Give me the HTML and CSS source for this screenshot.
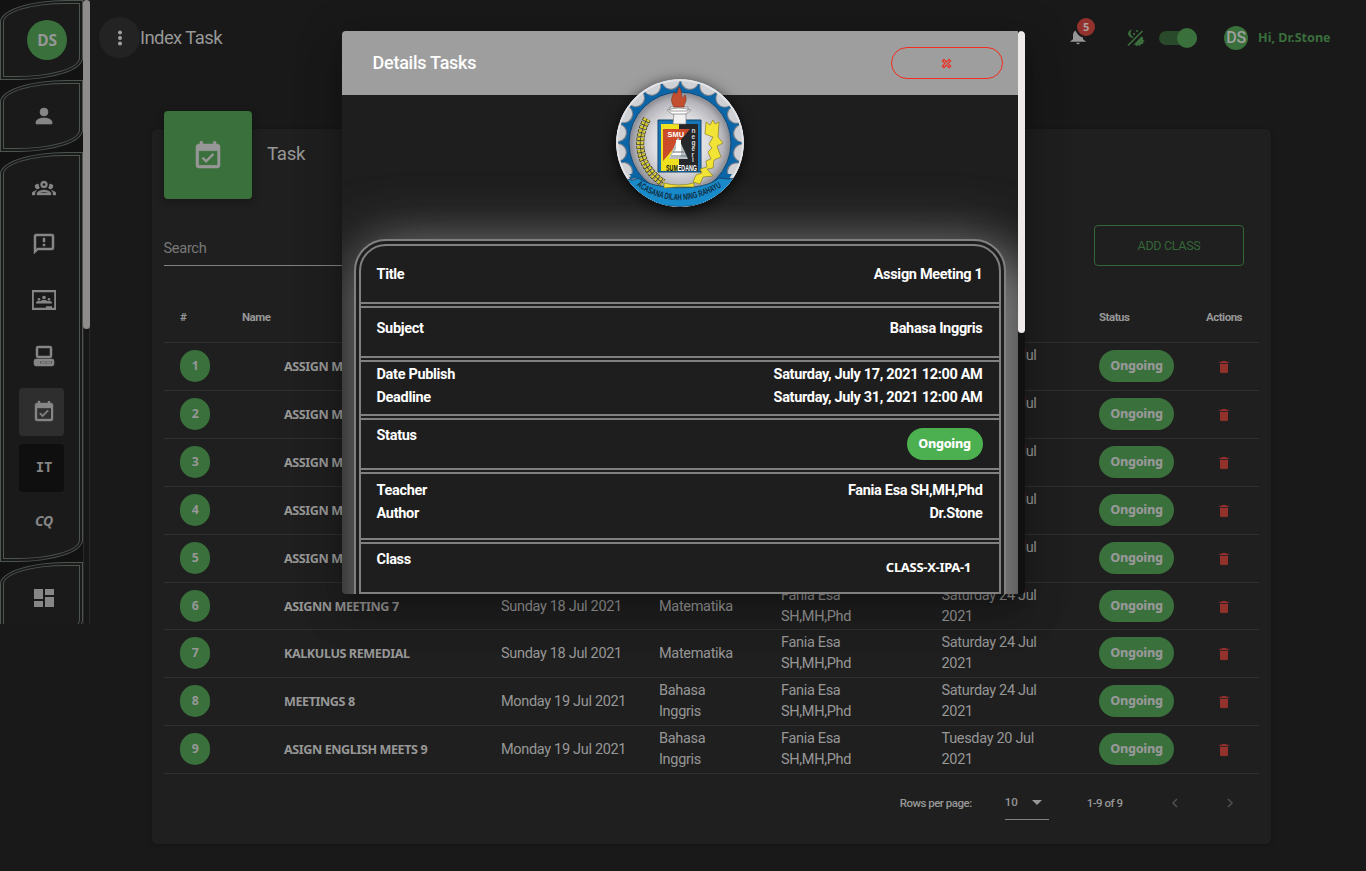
FILE: index.html
```html
<!DOCTYPE html>
<html lang="en">
<head>
<meta charset="utf-8">
<title>Index Task</title>
<link rel="stylesheet" href="styles.css">
</head>
<body>
<svg class="defs" width="0" height="0">
  <symbol id="calendar" viewBox="0 0 24 24"><path d="M19,19H5V8H19M16,1V3H8V1H6V3H5C3.89,3 3,3.89 3,5V19A2,2 0 0,0 5,21H19A2,2 0 0,0 21,19V5C21,3.89 20.1,3 19,3H18V1M16.53,11.06L15.47,10L10.59,14.88L8.47,12.76L7.41,13.82L10.59,17L16.53,11.06Z" stroke="currentColor" stroke-width=".4"/></symbol>
  <symbol id="trash" viewBox="0 0 24 24"><path d="M19,4H15.5L14.5,3H9.5L8.5,4H5V6H19M6,19A2,2 0 0,0 8,21H16A2,2 0 0,0 18,19V7H6V19Z"/></symbol>
</svg>
<div class="app">
  <aside class="sidebar">
    <nav class="rail">
      <div class="group group-avatar"><span class="avatar">DS</span></div>
      <div class="group group-user">
        <svg class="icon" viewBox="0 0 24 24"><path d="M12,4A4,4 0 0,1 16,8A4,4 0 0,1 12,12A4,4 0 0,1 8,8A4,4 0 0,1 12,4M12,14C16.42,14 20,15.79 20,18V20H4V18C4,15.79 7.58,14 12,14Z" stroke="currentColor" stroke-width=".6"/></svg>
      </div>
      <div class="group group-menu">
        <a class="item"><svg class="icon" viewBox="0 0 24 24"><path stroke="currentColor" stroke-width=".4" d="M12,5A3.5,3.5 0 0,0 8.500,8.500A3.500,3.500 0 0,0 12,12A3.500,3.500 0 0,0 15.500,8.500A3.500,3.500 0 0,0 12,5M12,7A1.500,1.500 0 0,1 13.500,8.500A1.500,1.500 0 0,1 12,10A1.500,1.500 0 0,1 10.500,8.500A1.500,1.500 0 0,1 12,7M5.500,8A2.500,2.500 0 0,0 3,10.500C3,11.440 3.530,12.250 4.290,12.680C4.650,12.880 5.060,13 5.500,13C5.940,13 6.350,12.880 6.710,12.680C7.080,12.470 7.390,12.170 7.620,11.810C6.890,10.860 6.500,9.700 6.500,8.220C6.200,8.080 5.860,8 5.500,8M18.500,8C18.140,8 17.800,8.080 17.500,8.220C17.500,9.700 17.110,10.860 16.380,11.810C16.630,12.150 16.940,12.450 17.290,12.680C17.650,12.880 18.060,13 18.500,13C18.940,13 19.350,12.880 19.710,12.680C20.470,12.250 21,11.440 21,10.500A2.500,2.500 0 0,0 18.500,8M12,14C9.660,14 5,15.170 5,17.500V19H19V17.500C19,15.170 14.340,14 12,14M4.710,14.550C2.780,14.780 0,15.760 0,17.500V19H3V17.070C3,16.060 3.690,15.220 4.710,14.550M19.290,14.550C20.310,15.220 21,16.060 21,17.070V19H24V17.500C24,15.760 21.220,14.780 19.290,14.550M12,16C13.530,16 15.240,16.500 16.230,17H7.770C8.760,16.500 10.470,16 12,16Z"/></svg></a>
        <a class="item"><svg class="icon" viewBox="0 0 24 24"><path stroke="currentColor" stroke-width=".5" d="M13,10H11V6H13V10M13,14H11V12H13V14M20,2A2,2 0 0,1 22,4V16A2,2 0 0,1 20,18H6L2,22V4C2,2.890 2.900,2 4,2H20M20,4H4V17.170L5.170,16H20V4Z"/></svg></a>
        <a class="item"><svg class="icon" viewBox="0 0 24 24"><path fill-rule="evenodd" d="M-.5,2H24.500V22H-.5ZM1.800,4.300V19.700H14V18.300H20V19.700H22.200V4.300Z"/><circle cx="12" cy="9.500" r="1.800"/><circle cx="7" cy="11.300" r="1.300"/><circle cx="17" cy="11.300" r="1.300"/><path d="M4,15.500V14.800C4,13 7,12.600 8.300,13.300C9.500,11.700 14.500,11.700 15.700,13.300C17,12.600 20,13 20,14.800V15.500Z"/></svg></a>
        <a class="item"><svg class="icon" viewBox="0 0 24 24"><path fill-rule="evenodd" d="M6,2H18A2,2 0 0,1 20,4V12A2,2 0 0,1 18,14H6A2,2 0 0,1 4,12V4A2,2 0 0,1 6,2M6,4V12H18V4ZM4,15H20A2,2 0 0,1 22,17V20A2,2 0 0,1 20,22H4A2,2 0 0,1 2,20V17A2,2 0 0,1 4,15M8,17.500V19.500H20V17.500ZM9,18H13.500V19H9ZM14.500,18H19V19H14.500Z" stroke="currentColor" stroke-width=".5"/></svg></a>
        <a class="item active"><svg class="icon"><use href="#calendar"/></svg></a>
        <a class="item dark"><span class="glyph mono">IT</span></a>
        <a class="item"><span class="glyph slant">CQ</span></a>
      </div>
      <div class="group group-last">
        <svg class="icon" viewBox="0 0 24 24"><path d="M13,3V9H22V3M13,21H22V11H13M2,21H11V15H2M2,13H11V3H2V13Z"/></svg>
      </div>
    </nav>
    <div class="track"><div class="thumb"></div></div>
  </aside>

  <main class="main">
    <header class="topbar">
      <button class="more"><svg class="icon22" viewBox="0 0 24 24"><circle cx="12" cy="6" r="2.200"/><circle cx="12" cy="12" r="2.200"/><circle cx="12" cy="18" r="2.200"/></svg></button>
      <h1 class="page-title">Index Task</h1>
      <div class="tools">
        <div class="bell">
          <svg class="bell-icon" viewBox="0 0 24 24"><path d="M12 22c1.100 0 2-.9 2-2h-4a2 2 0 0 0 2 2zm6-6v-5c0-3.070-1.640-5.640-4.500-6.320V4a1.500 1.500 0 0 0-3 0v.68C7.630 5.360 6 7.920 6 11v5l-3.500 2.500V19h19v-.5z"/></svg>
          <span class="count">5</span>
        </div>
        <svg class="theme" viewBox="0 0 20 20"><path d="M5.200 2A4.600 4.600 0 0 0 7.300 9.300A3.900 3.900 0 0 1 2.600 4.500Q3 2.700 5.200 2Z" stroke="currentColor" stroke-width=".8"/><path d="M2 17.500L16.500 3" stroke="currentColor" stroke-width="1.700"/><path d="M7.500 16.800L15.500 8.500L17.200 9.600L16.800 11.500L18.800 13L17 14L17.300 16L15 16L14 18.200L12.300 17L10 18.200L9.500 16.800Z"/><circle cx="8" cy="6" r="1.100"/><circle cx="11" cy="3" r="1.100"/></svg>
        <span class="switch"><span class="knob"></span></span>
        <span class="me">DS</span>
        <span class="hello">Hi, Dr.Stone</span>
      </div>
    </header>

    <section class="card">
      <div class="card-head">
        <div class="tile"><svg class="tile-icon"><use href="#calendar"/></svg></div>
        <span class="card-title">Task</span>
      </div>
      <div class="filters">
        <div class="search">Search</div>
        <button class="add">ADD CLASS</button>
      </div>
      <div class="table">
        <div class="row head"><span>#</span><span>Name</span><span></span><span></span><span></span><span></span><span>Status</span><span>Actions</span></div>
        <div class="row"><span class="num">1</span><b>ASSIGN MEETING</b><span></span><span></span><span></span><span class="due">Saturday 31 Jul<br>2021</span><span class="pill">Ongoing</span><svg class="trash"><use href="#trash"/></svg></div>
        <div class="row"><span class="num">2</span><b>ASSIGN MEETING</b><span></span><span></span><span></span><span class="due">Saturday 31 Jul<br>2021</span><span class="pill">Ongoing</span><svg class="trash"><use href="#trash"/></svg></div>
        <div class="row"><span class="num">3</span><b>ASSIGN MEETING</b><span></span><span></span><span></span><span class="due">Saturday 31 Jul<br>2021</span><span class="pill">Ongoing</span><svg class="trash"><use href="#trash"/></svg></div>
        <div class="row"><span class="num">4</span><b>ASSIGN MEETING</b><span></span><span></span><span></span><span class="due">Saturday 31 Jul<br>2021</span><span class="pill">Ongoing</span><svg class="trash"><use href="#trash"/></svg></div>
        <div class="row"><span class="num">5</span><b>ASSIGN MEETING</b><span></span><span></span><span></span><span class="due">Saturday 31 Jul<br>2021</span><span class="pill">Ongoing</span><svg class="trash"><use href="#trash"/></svg></div>
        <div class="row short"><span class="num">6</span><b>ASIGNN MEETING 7</b><span>Sunday 18 Jul 2021</span><span>Matematika</span><span>Fania Esa<br>SH,MH,Phd</span><span class="due">Saturday 24 Jul<br>2021</span><span class="pill">Ongoing</span><svg class="trash"><use href="#trash"/></svg></div>
        <div class="row"><span class="num">7</span><b>KALKULUS REMEDIAL</b><span>Sunday 18 Jul 2021</span><span>Matematika</span><span>Fania Esa<br>SH,MH,Phd</span><span class="due">Saturday 24 Jul<br>2021</span><span class="pill">Ongoing</span><svg class="trash"><use href="#trash"/></svg></div>
        <div class="row"><span class="num">8</span><b>MEETINGS 8</b><span>Monday 19 Jul 2021</span><span>Bahasa<br>Inggris</span><span>Fania Esa<br>SH,MH,Phd</span><span class="due">Saturday 24 Jul<br>2021</span><span class="pill">Ongoing</span><svg class="trash"><use href="#trash"/></svg></div>
        <div class="row"><span class="num">9</span><b>ASIGN ENGLISH MEETS 9</b><span>Monday 19 Jul 2021</span><span>Bahasa<br>Inggris</span><span>Fania Esa<br>SH,MH,Phd</span><span class="due">Tuesday 20 Jul<br>2021</span><span class="pill">Ongoing</span><svg class="trash"><use href="#trash"/></svg></div>
      </div>
      <footer class="pager">
        <span class="rows-label">Rows per page:</span>
        <span class="select">10<svg viewBox="0 0 10 5" width="10" height="5"><path d="M0 0H10L5 5Z"/></svg></span>
        <span class="range">1-9 of 9</span>
        <svg class="chev" viewBox="0 0 8 10"><path d="M6 1L2 5L6 9"/></svg>
        <svg class="chev" viewBox="0 0 8 10"><path d="M2 1L6 5L2 9"/></svg>
      </footer>
    </section>
  </main>
</div>

<div class="overlay">
  <div class="modal">
    <div class="modal-body">
      <header class="modal-head">
        <h2>Details Tasks</h2>
        <button class="close"><svg width="13" height="13" viewBox="0 0 24 24"><path stroke="currentColor" stroke-width=".3" d="M3,16.740L7.760,12L3,7.260L7.260,3L12,7.760L16.740,3L21,7.260L16.240,12L21,16.740L16.740,21L12,16.240L7.260,21L3,16.740M12,13.410L16.740,18.160L18.160,16.740L13.410,12L18.160,7.260L16.740,5.840L12,10.590L7.260,5.840L5.840,7.260L10.590,12L5.840,16.740L7.260,18.160L12,13.410Z"/></svg></button>
      </header>
      <svg class="crest" viewBox="0 0 128 128">
        <defs>
          <radialGradient id="silver"><stop offset="0" stop-color="#fff"/><stop offset=".55" stop-color="#dcdce0"/><stop offset=".85" stop-color="#b4b4ba"/><stop offset="1" stop-color="#85858d"/></radialGradient>
          <clipPath id="round"><circle cx="64" cy="64" r="64"/></clipPath>
          <path id="motto" d="M20.500,106.500Q62,137 112,104"/>
        </defs>
        <g clip-path="url(#round)">
          <circle cx="64" cy="64" r="64" fill="#0c65a6"/>
          <circle cx="64" cy="64" r="63" fill="none" stroke="#77808c" stroke-width="18.500" stroke-linecap="round" stroke-dasharray="0 19.790" transform="rotate(-81 64 64)"/>
          <circle cx="64" cy="64" r="63.500" fill="none" stroke="#d0d1d5" stroke-width="17" stroke-linecap="round" stroke-dasharray="0 19.950" transform="rotate(-81 64 64)"/>
          <circle cx="64" cy="64" r="63" fill="none" stroke="#e4e4e6" stroke-width="2.400"/>
          <circle cx="64" cy="64" r="51" fill="url(#silver)" stroke="#0a4c80"/>
          <path d="M13 95Q18 101 23 95ZM103 95H116L112 101Z" fill="#0c65a6"/>
          <path d="M8 99Q17 103 22 99C38 111 88 113 103 99Q112 101 120 99Q106 127.500 64 127.500Q22 127.500 8 99Z" fill="#198ac9" stroke="#163c5a" stroke-width=".8"/>
        </g>
        <path d="M42 41H85V93H42Z" fill="#1676b8" stroke="#134468" stroke-width="1"/>
        <path d="M45 45H63V92H45Z" fill="#efe020"/><path d="M63 45H82V92H63Z" fill="#25272a"/>
        <path d="M47 50H74L47 82Z" fill="#cb4a2a"/>
        <path d="M62 58L72 80H53Z" fill="#b9bfc5"/><path d="M60 61H65V76H60ZM54 78L60 70L65 78Z" fill="#fff"/><path d="M55 77H71M57 73H68" stroke="#68727c" stroke-width="1"/>
        <path d="M58 34H70V45H57Z" fill="#f1f1f1" stroke="#777" stroke-width=".6"/>
        <path d="M51 31Q63 27 75 31L70 35H56ZM54 28H72V32H54Z" fill="#fff" stroke="#777" stroke-width=".7"/>
        <path d="M58 28C53 20 57 18 58 13C61 17 61 14 63 8C67 12 64 17 67 19L69 16C72 22 68 24 68 28Z" fill="#c44f30" stroke="#813019" stroke-width=".6"/>
        <path d="M31 40C18 64 24 88 47 104" fill="none" stroke="#3e3a16" stroke-width="8" stroke-dasharray="3 1"/>
        <path d="M31 40C18 64 24 88 47 104" fill="none" stroke="#d9cc37" stroke-width="6.500" stroke-dasharray="2.300 1.700"/>
        <path d="M31 40C18 64 24 88 47 104" fill="none" stroke="#3e3a16" stroke-width=".8"/>
        <path d="M90 43L94 46L97 41L99 45L103 43L102 58L107 64L101 67L105 78L98 81L97 89L91 90L97 97L87 98L84 105L77 103L80 96L86 94L84 90L91 88L90 82L95 80L92 73L96 69L93 65L97 58L89 55Z" fill="#f2e436" stroke="#7d7313" stroke-width=".6"/>
        <path d="M48 104Q63 108 78 104V108Q63 107 48 109Z" fill="#eee13c" stroke="#7d7313" stroke-width=".6"/>
        <text x="51.500" y="58" class="crest-smu" textLength="16.500" lengthAdjust="spacingAndGlyphs">SMU</text>
        <text class="crest-side"><tspan x="75.500" y="53.500">n</tspan><tspan x="75.500" y="59.500">e</tspan><tspan x="75.500" y="65.500">g</tspan><tspan x="75.500" y="71.500">e</tspan><tspan x="75.500" y="77.500">r</tspan><tspan x="76" y="83">i</tspan></text>
        <text x="50" y="92" class="crest-city" textLength="31" lengthAdjust="spacingAndGlyphs"><tspan fill="#111">SUM</tspan><tspan fill="#fff">EDANG</tspan></text>
        <text class="crest-motto" textLength="91" lengthAdjust="spacingAndGlyphs"><textPath href="#motto" textLength="91" lengthAdjust="spacingAndGlyphs">ACASANA DILAH NING RAHAYU</textPath></text>
      </svg>
      <div class="details">
        <div class="line r-title"><span>Title</span><span>Assign Meeting 1</span></div>
        <div class="line r-subject"><span>Subject</span><span>Bahasa Inggris</span></div>
        <div class="line r-dates"><span>Date Publish<br>Deadline</span><span>Saturday, July 17, 2021 12:00 AM<br>Saturday, July 31, 2021 12:00 AM</span></div>
        <div class="line r-status"><span>Status</span><span class="pill bright">Ongoing</span></div>
        <div class="line r-people"><span>Teacher<br>Author</span><span>Fania Esa SH,MH,Phd<br>Dr.Stone</span></div>
        <div class="line r-class"><span>Class</span><span class="class-name">CLASS-X-IPA-1</span></div>
      </div>
    </div>
    <div class="modal-track"><div class="modal-thumb"></div></div>
  </div>
</div>
</body>
</html>
```
FILE: styles.css
```css
* { box-sizing: border-box; }
body {
  margin: 0; height: 871px; overflow: hidden; background: #191919; color: #979797;
  font: 14.500px/21px Roboto, sans-serif; letter-spacing: -0.32px; position: relative;
}
button { font: inherit; letter-spacing: inherit; background: none; border: 0; padding: 0; }
svg { display: block; fill: currentColor; flex: none; }
.defs { position: absolute; }
.app { display: flex; height: 871px; }

/* Sidebar */
.sidebar { display: flex; width: 90px; height: 624px; background: #121212; overflow: hidden; flex: none; }
.rail { width: 83px; color: #868686; }
.group {
  border: 4px double #4d554f; border-radius: 66px 0 66px 0 / 22px 0 22px 0;
  background: #1a1a1a; display: flex; align-items: center; justify-content: center; padding-left: 5px;
}
.group-avatar { height: 80px; padding-left: 11px; }
.group-user { height: 72px; }
.group-menu { height: 410px; flex-direction: column; justify-content: flex-start; gap: 8px; padding-top: 8px; padding-left: 0; }
.group-last { height: 80px; padding-bottom: 8px; }
.icon { width: 24px; height: 24px; }
.avatar {
  width: 40px; height: 40px; border-radius: 50%; background: #39703b; color: #979797;
  font: 700 15.500px/40px "Noto Sans", sans-serif; text-align: center; letter-spacing: -0.3px;
}
.item { width: 45px; height: 48px; border-radius: 4px; display: flex; align-items: center; justify-content: center; padding-left: 5px; flex: none; }
.item.active { background: #2e2e2e; }
.item.dark { background: #0f0f0f; }
.glyph { font: 700 14px/20px "Noto Sans", sans-serif; letter-spacing: -0.2px; margin-top: -2px; }
.mono { font-family: "DejaVu Sans Mono", monospace; letter-spacing: -0.2px; }
.slant { font-style: italic; margin-top: -6px; }
.track { width: 7px; background: #171717; border: solid #292929; border-width: 0 1px; }
.thumb { width: 7px; height: 329px; margin-left: -1px; background: #8f8c8c; border-radius: 4px; }

/* Top bar */
.main { flex: 1; padding: 0 95px 0 62px; }
.topbar { display: flex; align-items: center; height: 75px; margin: 0 -59px 0 -53px; }
.more { width: 41px; height: 41px; border-radius: 50%; background: #232323; color: #a0a0a0; display: flex; align-items: center; justify-content: center; }
.icon22 { width: 22px; height: 22px; }
.page-title { margin: 0; font: 400 18.500px/24px Roboto, sans-serif; letter-spacing: -0.6px; }
.tools { margin-left: auto; display: flex; align-items: center; color: #3a6e3c; }
.bell { position: relative; color: #979797; margin-right: 38px; }
.bell-icon { width: 20px; height: 20px; margin-top: -4px; }
.count {
  position: absolute; left: 9px; top: -12px; width: 18px; height: 18px; border-radius: 50%;
  background: #93322c; color: #b0a0a0; box-shadow: 0 0 0 2px #191919; font: 700 11px/18px "Noto Sans", sans-serif; text-align: center;
}
.theme { width: 20px; height: 20px; margin-right: 13px; }
.switch { width: 38px; height: 14px; border-radius: 7px; background: #294a2b; display: flex; align-items: center; justify-content: flex-end; margin-right: 27px; }
.knob { width: 20px; height: 20px; border-radius: 50%; background: #39703b; }
.me { width: 24px; height: 24px; border-radius: 50%; background: #39703b; color: #a0a0a0; line-height: 24px; text-align: center; font-size: 16px; font-weight: 500; margin-right: 10px; }
.hello { font: 700 12.600px/18px "Noto Sans", sans-serif; letter-spacing: 0; width: 73px; white-space: nowrap; margin-right: -1px; }

/* Card */
.card { margin-top: 54px; height: 715px; padding: 0 12px; background: #1f1f1f; border-radius: 5px; box-shadow: 0 1px 4px rgba(0,0,0,.25); }
.card-head { display: flex; height: 70px; gap: 15px; }
.tile { width: 88px; height: 88px; margin-top: -18px; padding: 2px 1px 0 0; border-radius: 4px; background: #39703b; box-shadow: 0 2px 8px rgba(0,0,0,.3); display: flex; align-items: center; justify-content: center; color: #979797; flex: none; }
.tile-icon { width: 32px; height: 32px; }
.card-title { font-size: 18.700px; line-height: 24px; padding-top: 13px; }
.filters { display: flex; justify-content: space-between; margin-top: 26px; padding-right: 15px; }
.search { width: 560px; height: 41px; border-bottom: 1px solid #828282; color: #787878; font-size: 14.600px; line-height: 46px; text-indent: -0.5px; }
.add { width: 150px; height: 41px; border: 1px solid #356638; border-radius: 4px; color: #356638; font-size: 12.500px; }
.table { margin-top: 27px; }
.row {
  display: grid; grid-template-columns: 62px 259px 158px 122px 161px 157px 107px 1fr;
  height: 48px; align-items: center; padding: 0 0 1px 16px; border-bottom: 1px solid #303030; white-space: nowrap;
}
.row.short { height: 47px; padding-bottom: 0; }
.row.head { height: 50px; padding-bottom: 0; font-size: 11.500px; font-weight: 700; letter-spacing: -0.5px; }
.row.head span:last-child, .row .trash { justify-self: start; }
.row b { font: 700 12.600px/18px "Noto Sans", sans-serif; letter-spacing: -0.42px; padding: 1px 0 0 42px; }
.due { margin-left: -0.5px; }
.num { width: 30px; height: 32px; border-radius: 16px; background: #39703b; text-align: center; font: 700 12.300px/32px "Noto Sans", sans-serif; }
.pill { width: 75px; height: 32px; border-radius: 16px; background: #39703b; font: 800 12.600px/32px "Noto Sans", sans-serif; letter-spacing: -0.3px; text-align: center; }
.trash { width: 16px; height: 16px; margin: 2px 0 0 10px; color: #93322c; }
.pager { display: flex; align-items: center; height: 58px; font-size: 11.500px; font-weight: 500; letter-spacing: -0.5px; padding-right: 25px; justify-content: flex-end; }
.select { display: flex; align-items: center; gap: 14px; width: 44px; height: 33px; border-bottom: 1px solid #828282; margin: 0 38px 0 33px; letter-spacing: 0; }
.chev { width: 8px; height: 10px; fill: none; stroke: #505050; stroke-width: 1.500; margin-left: 48.500px; }
.chev + .chev { margin-left: 47px; }

/* Modal */
.overlay { position: absolute; inset: 0; display: flex; justify-content: center; align-items: flex-start; padding: 31px 0 0 1px; }
.modal {
  width: 683px; height: 563px; display: flex; overflow: hidden; border-radius: 4px; background: #1e1e1e; color: #fff;
  box-shadow: 0 11px 15px -7px rgba(0,0,0,.2), 0 24px 38px 3px rgba(0,0,0,.14), 0 9px 46px 8px rgba(0,0,0,.12);
}
.modal-body { width: 676px; height: 563px; overflow: hidden; display: flex; flex-direction: column; align-items: center; }
.modal-head { width: 676px; height: 64px; flex: none; background: #9e9e9e; display: flex; align-items: center; justify-content: space-between; padding: 0 15px 0 30.500px; }
.modal-head h2 { margin: 0; font: 500 18px/24px Roboto, sans-serif; letter-spacing: -0.25px; }
.close { width: 112px; height: 32px; border: 1px solid #f22c1e; border-radius: 16px; color: #f22c1e; display: flex; align-items: center; justify-content: center; padding-right: 1px; }
.crest { width: 128px; height: 128px; margin-top: -16px; border-radius: 50%; box-shadow: 0 3px 14px rgba(0,0,0,.75); position: relative; z-index: 1; }
.crest-smu { font: 700 6.800px "Liberation Sans", sans-serif; fill: #fff; letter-spacing: 0; }
.crest-side { font: 700 6.500px "Liberation Sans", sans-serif; fill: #ddd; letter-spacing: 0; }
.crest-city { font: 700 9.500px "Liberation Sans", sans-serif; letter-spacing: 0; }
.crest-motto { font: 700 9px "Liberation Sans", sans-serif; fill: #102c40; letter-spacing: 0; }
.details {
  width: 652px; height: 700px; flex: none; margin-top: 32px; background: #1e1e1e;
  border: 7px double #808080; border-radius: 32px; font-weight: 700; line-height: 23px;
  box-shadow: 0 4px 60px rgba(128,128,128,.8), 22px 22px 50px rgba(128,128,128,.9);
}
.line { display: flex; justify-content: space-between; align-items: center; border-bottom: 6px double #808080; padding: 0 16.500px 0 15.500px; }
.line span:last-child { text-align: right; }
.r-title { height: 62px; }
.r-subject { height: 54px; padding-bottom: 8px; }
.r-dates { height: 58px; padding-bottom: 5px; }
.r-status { height: 54px; align-items: flex-start; padding-top: 4px; }
.r-people { height: 70px; padding-bottom: 9px; }
.r-class { height: 54px; align-items: flex-start; padding-top: 4px; }
.line span.bright { text-align: center; background: #4caf50; width: 76px; margin-top: 4px; }
.class-name { font: 700 13px/18px "Noto Sans", sans-serif; letter-spacing: -0.3px; margin: 10px 11.500px 0 0; }
.modal-track { width: 7px; background: #111; }
.modal-thumb { width: 7px; height: 302px; background: #efeaea; border-radius: 4px; }
```
